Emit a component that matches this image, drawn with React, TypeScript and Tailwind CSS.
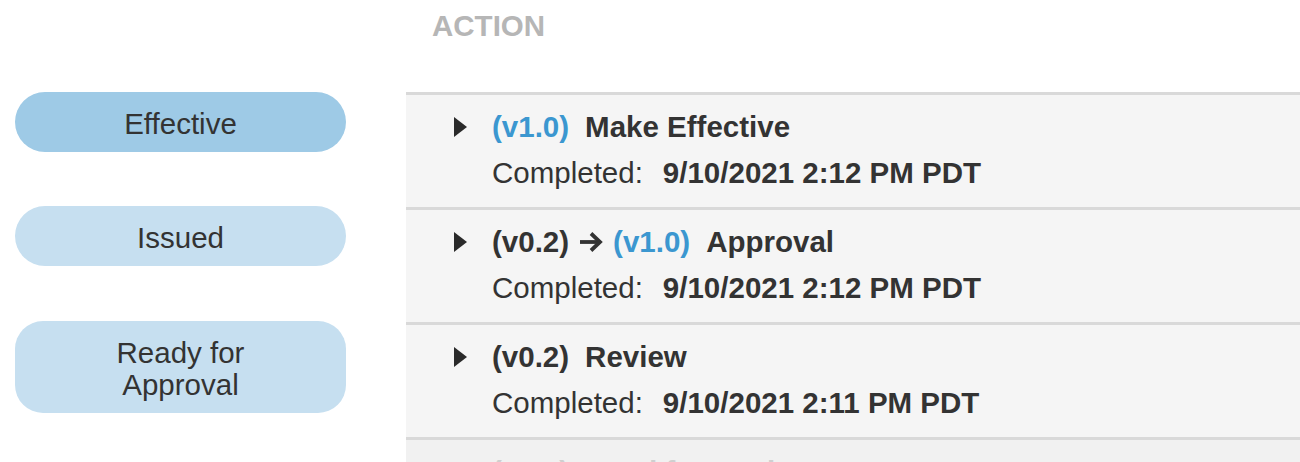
import React from "react";

const Tri = () => (
  <svg width="13" height="20" viewBox="0 0 13 20" className="shrink-0 w-[13px] h-[20px]">
    <polygon points="0,0 13,10 0,20" fill="#2a2a2a" />
  </svg>
);

const Arrow = () => (
  <svg width="24" height="22" viewBox="0 0 24 22" className="mx-[10px] shrink-0 w-[24px] h-[22px]">
    <path d="M1 11 H20.5" stroke="#333" strokeWidth="3.8" fill="none" />
    <path d="M12 2.5 L21 11 L12 19.5" stroke="#333" strokeWidth="3.8" fill="none" />
  </svg>
);

type Row = {
  pill?: { lines: string[]; active?: boolean };
  title: React.ReactNode;
  date: string;
  faded?: boolean;
};

const Blue = ({ children }: { children: React.ReactNode }) => (
  <span className="text-[#3b97d0]">{children}</span>
);

const rows: Row[] = [
  {
    pill: { lines: ["Effective"], active: true },
    title: (
      <>
        <Blue>(v1.0)</Blue>
        <span className="ml-[16px]">Make Effective</span>
      </>
    ),
    date: "9/10/2021 2:12 PM PDT",
  },
  {
    pill: { lines: ["Issued"] },
    title: (
      <>
        <span>(v0.2)</span>
        <Arrow />
        <Blue>(v1.0)</Blue>
        <span className="ml-[16px]">Approval</span>
      </>
    ),
    date: "9/10/2021 2:12 PM PDT",
  },
  {
    pill: { lines: ["Ready for", "Approval"] },
    title: (
      <>
        <span>(v0.2)</span>
        <span className="ml-[16px]">Review</span>
      </>
    ),
    date: "9/10/2021 2:11 PM PDT",
  },
  {
    title: (
      <>
        <span>(v0.1)</span>
        <span className="ml-[16px]">Send for Review</span>
      </>
    ),
    date: "9/10/2021 2:10 PM PDT",
    faded: true,
  },
];

export default function App() {
  return (
    <div
      className="w-[1300px] h-[462px] overflow-hidden bg-white text-[29.5px] leading-none text-[#333]"
      style={{ fontFamily: '"Liberation Sans", Arial, sans-serif' }}
    >
      <div className="flex h-[92px]">
        <div className="w-[406px] shrink-0" />
        <div className="pl-[26px] pt-[13px] font-bold text-[#b6b6b6] leading-[26px]">ACTION</div>
      </div>
      {rows.map((r, i) => (
        <div key={i} className="flex">
          <div className="w-[406px] shrink-0 pl-[15px]">
            {r.pill && (
              <div
                className={
                  "w-[331px] flex flex-col items-center justify-center text-[#333] pt-[3px] " +
                  (r.pill.active ? "bg-[#9ecae6] " : "bg-[#c6dff0] -mt-[1px] ") +
                  (r.pill.lines.length > 1 ? "h-[92px] rounded-[28px]" : "h-[60px] rounded-full")
                }
              >
                {r.pill.lines.map((l) => (
                  <div key={l} className="leading-[32px]">
                    {l}
                  </div>
                ))}
              </div>
            )}
          </div>
          <div
            className={
              "flex-1 border-t-[3px] border-[#d9d9d9] pl-[48px] pt-[14px] pb-[16px] " +
              (r.faded ? "bg-[#f1f1f1] text-[#cfcfcf]" : "bg-[#f5f5f5]")
            }
          >
            <div className="flex items-center h-[36px] font-bold">
              <Tri />
              <div className="ml-[25px] flex items-center">{r.title}</div>
            </div>
            <div className="flex items-center h-[36px] mt-[10px] pl-[38px]">
              <span>Completed:</span>
              <span className="ml-[20px] font-bold">{r.date}</span>
            </div>
          </div>
        </div>
      ))}
    </div>
  );
}
